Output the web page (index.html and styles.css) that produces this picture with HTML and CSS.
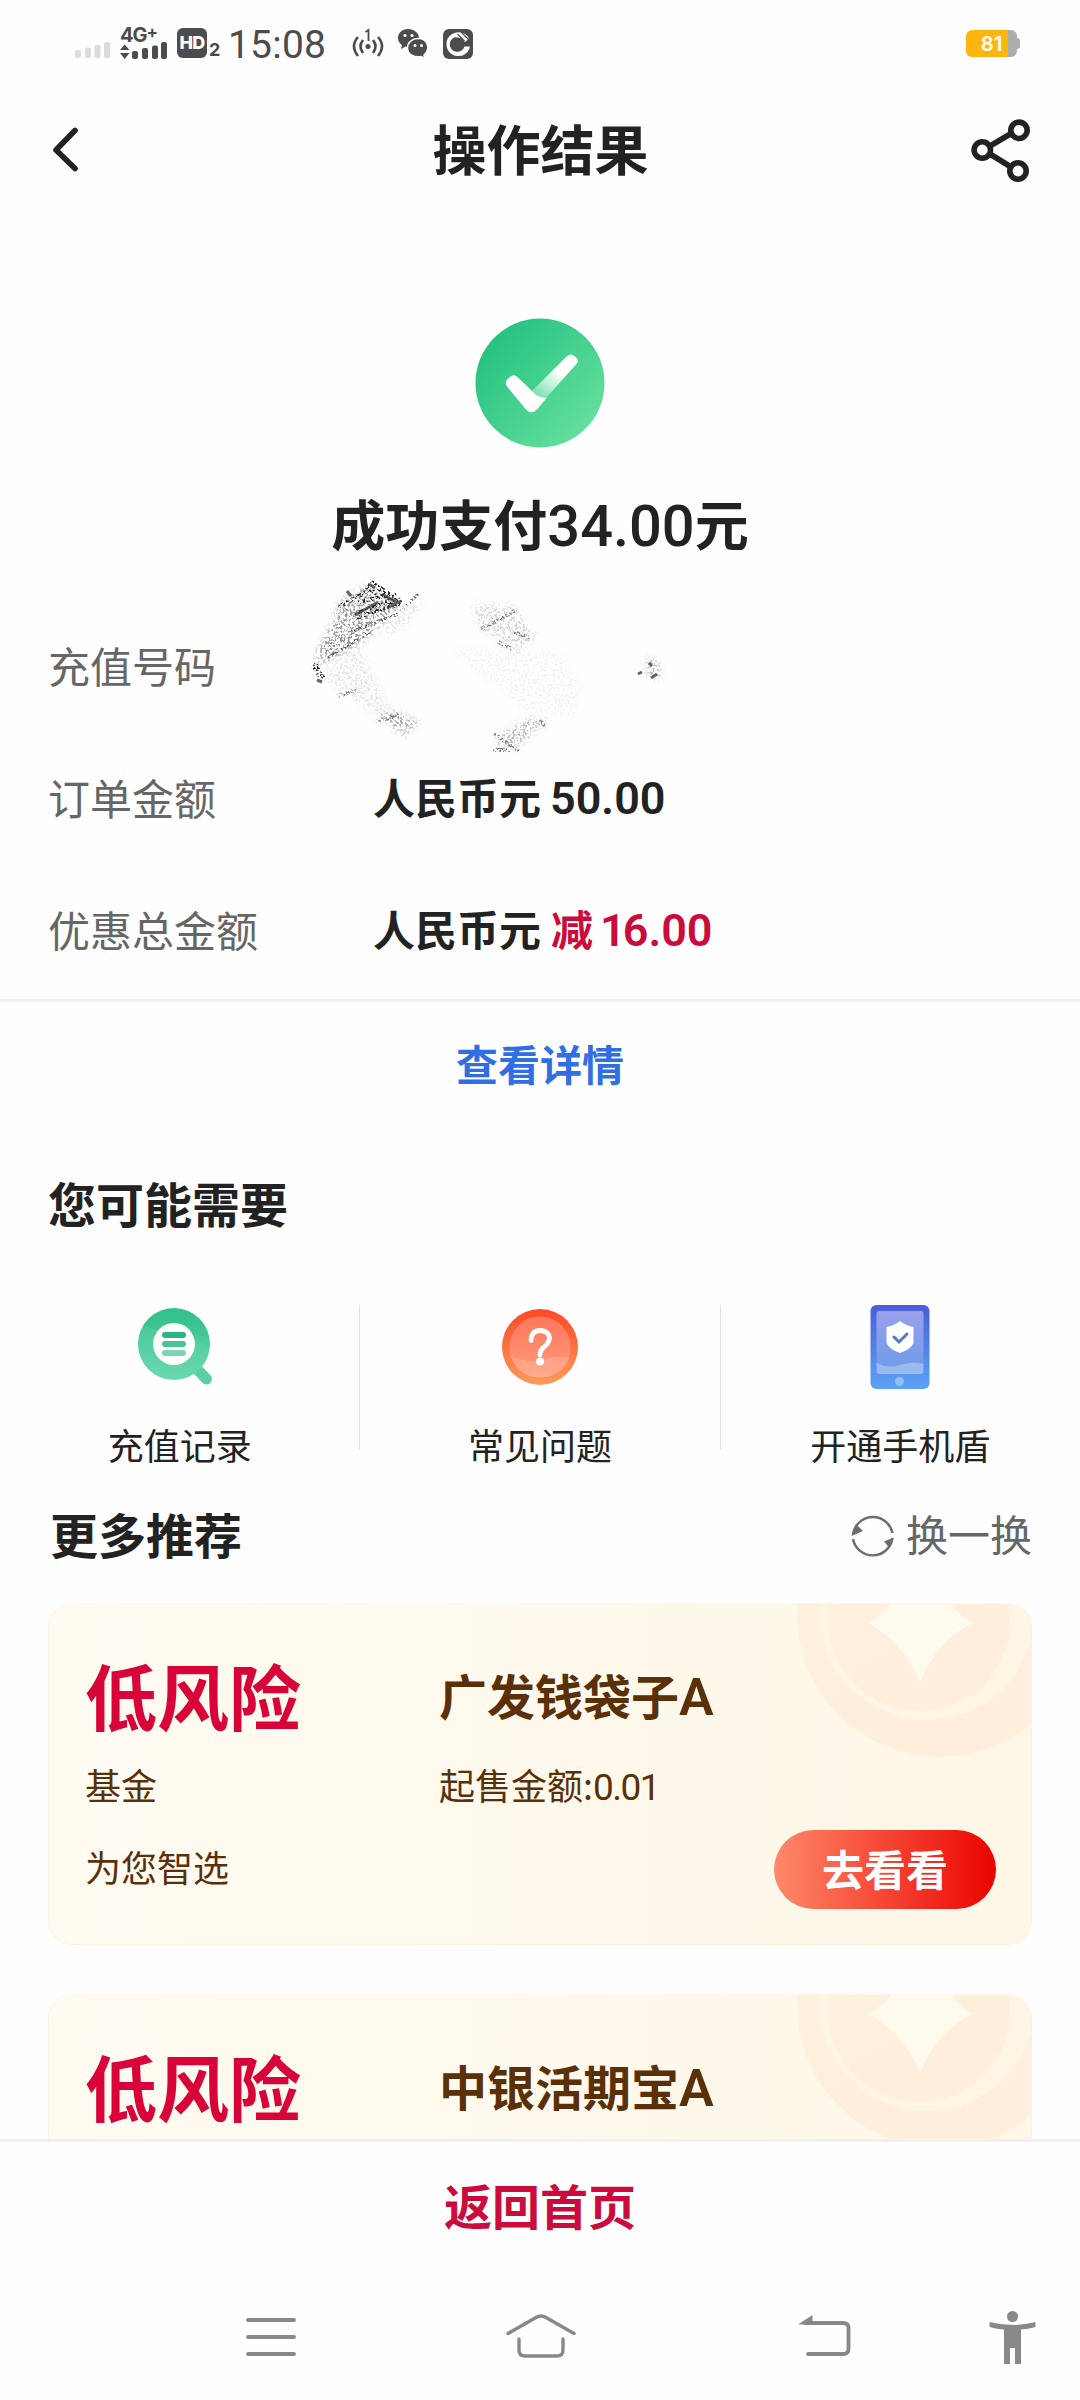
FILE: index.html
```html
<!DOCTYPE html>
<html lang="zh-CN">
<head>
<meta charset="utf-8">
<title>操作结果</title>
<link rel="stylesheet" href="styles.css">
</head>
<body>
<svg class="defs" width="0" height="0" aria-hidden="true">
  <defs>
    <linearGradient id="coinFill" x1="0" y1="0" x2=".6" y2="1"><stop offset="0" stop-color="#fef2e0"/><stop offset="1" stop-color="#feeedb"/></linearGradient>
    <symbol id="coin" viewBox="0 0 236 156">
      <circle cx="144" cy="11" r="143" fill="url(#coinFill)"/>
      <circle cx="131" cy="9" r="108" fill="#fef5e5"/>
      <circle cx="123" cy="17" r="91" fill="url(#coinFill)"/>
      <path d="M72 20Q87 13 97-2H152Q162 11 177 20Q142 36 124 79Q108 40 72 20Z" fill="#fffaee"/>
    </symbol>
  </defs>
</svg>
<div class="screen">
  <header class="status">
    <svg class="signal" width="36" height="18" viewBox="0 0 36 18" fill="#dcdcdc"><rect x="0" y="8" width="6" height="8" rx="2"/><rect x="10" y="5.500" width="6" height="10.500" rx="2"/><rect x="19.500" y="3" width="6" height="13" rx="2"/><rect x="29" y="0" width="6" height="16" rx="2"/></svg>
    <div class="network"><span class="gen">4G<sup>+</sup></span>
      <svg width="48" height="18" viewBox="0 0 48 18" fill="#4c4c4c"><path d="M0 8L4.700 2.500L9.500 8ZM0 11H9.500L4.700 17Z"/><rect x="12" y="9" width="6" height="8" rx="2"/><rect x="22" y="6" width="6" height="11" rx="2"/><rect x="32" y="3.500" width="6" height="13.500" rx="2"/><rect x="41" y="0" width="6" height="17" rx="2"/></svg>
    </div>
    <span class="hd">HD</span><span class="sim">2</span>
    <span class="clock">15:08</span>
    <svg class="hotspot" width="32" height="30" viewBox="0 0 32 30" fill="none" stroke="#4c4c4c" stroke-width="2.600"><path d="M6 9Q-2 18 6 28M11 12Q6 18 11 25M21 12Q26 18 21 25M26 9Q34 18 26 28"/><circle cx="16" cy="18.500" r="2.500" fill="#4c4c4c" stroke="none"/><path d="M13.500 4L16.500 2V13" stroke-width="1.800"/></svg>
    <svg class="wechat" width="32" height="32" viewBox="0 0 32 32"><path d="M11 1C5 1 1 5 1 10C1 13 2.500 15.500 5 17L4 21L8.500 18.600C16 20 22 16 22 10C22 5 17 1 11 1Z" fill="#4c4c4c"/><path d="M21 10.500C15 10.500 10.500 14.500 10.500 20C10.500 26 17 30 24 28.500L28 30.500L27 27C33 22 32 10.500 21 10.500Z" fill="#4c4c4c" stroke="#fff" stroke-width="1.500"/><g fill="#fff"><circle cx="8" cy="7.500" r="1.600"/><circle cx="15" cy="7.500" r="1.600"/><circle cx="18" cy="17.500" r="1.500"/><circle cx="24.500" cy="17.500" r="1.500"/></g></svg>
    <svg class="ccb" width="30" height="30" viewBox="0 0 30 30"><rect width="30" height="30" rx="6" fill="#4c4c4c"/><path d="M16 3.300A11.900 11.900 0 1 0 27 17.500H21.500A7.500 7.500 0 1 1 12 8.200L18 9L22 13L26 9.500A11.900 11.900 0 0 0 16 3.300Z" fill="#fff"/><path d="M14.500 8.500L21 15L14.500 21.500L8 15Z" fill="#4c4c4c"/><path d="M14.500 5L21.500 12M18 3L26 11" stroke="#4c4c4c" stroke-width="1.200"/></svg>
    <div class="battery"><span>81</span></div>
  </header>

  <nav class="titlebar">
    <svg width="30" height="50" viewBox="0 0 30 50" fill="none" stroke="#222" stroke-width="5.600" stroke-linecap="round" stroke-linejoin="round"><path d="M25 5.500L6 25L25 43.500"/></svg>
    <h1>操作结果</h1>
    <svg class="share" width="60" height="66" viewBox="0 0 60 66" fill="none" stroke="#222" stroke-width="5.600"><path d="M20 29L42 16M20 37L41 50"/><circle cx="12.300" cy="33" r="8.200"/><circle cx="49" cy="13.300" r="8.200"/><circle cx="48" cy="54" r="8.200"/></svg>
  </nav>

  <section class="result">
    <svg width="130" height="130" viewBox="0 0 130 130">
      <defs><linearGradient id="ok" x1=".1" y1=".15" x2=".9" y2=".9"><stop offset="0" stop-color="#25c181"/><stop offset="1" stop-color="#66e19d"/></linearGradient>
      <linearGradient id="arm" gradientUnits="userSpaceOnUse" x1="84" y1="54" x2="67" y2="80"><stop offset="0" stop-color="#fff"/><stop offset="1" stop-color="#fff" stop-opacity=".3"/></linearGradient></defs>
      <circle cx="65" cy="65" r="64.500" fill="url(#ok)"/>
      <path d="M92 38Q96 35 99.500 38L101.500 40Q104.500 43 101.500 46L70 81Q63 80 57 73Z" fill="url(#arm)"/>
      <path d="M35.500 58.500Q39.500 56 42.500 59L57 73Q64 81 72 79.500L62 91.500Q56.500 97 51 91.500L32 68.500Q29.500 65 32 61.500Z" fill="#fff"/>
    </svg>
    <h2>成功支付<span class="num">34.00</span>元</h2>
  </section>

  <dl class="details">
    <div class="row"><dt>充值号码</dt><dd class="erased">
      <svg width="360" height="190" viewBox="0 -3 360 190">
        <defs>
          <filter id="grain" x="-10%" y="-10%" width="120%" height="120%"><feTurbulence type="fractalNoise" baseFrequency=".45" numOctaves="3" seed="7" result="n"/><feColorMatrix in="n" type="matrix" values="0 0 0 0 0  0 0 0 0 0  0 0 0 0 0  9 0 0 0 -4.500" result="m"/><feComposite in="SourceGraphic" in2="m" operator="in"/></filter>
          <filter id="dust" x="-10%" y="-10%" width="120%" height="120%"><feGaussianBlur in="SourceGraphic" stdDeviation="3" result="b"/><feTurbulence type="fractalNoise" baseFrequency=".4" numOctaves="3" seed="3" result="n"/><feColorMatrix in="n" type="matrix" values="0 0 0 0 0  0 0 0 0 0  0 0 0 0 0  7 0 0 0 -3.400" result="m"/><feComposite in="b" in2="m" operator="in"/></filter>
        </defs>
        <g filter="url(#dust)">
          <path d="M57 14L92 34L70 54L22 84L10 78L26 48L32 30Z" fill="#222" fill-opacity=".45"/>
          <path d="M7 80L80 46L52 74L10 96Z" fill="#333" fill-opacity=".3"/>
          <path d="M12 105L50 75L90 150L60 138Z" fill="#555" fill-opacity=".14"/>
          <path d="M80 48L120 25L100 52L75 65Z" fill="#555" fill-opacity=".16"/>
          <path d="M68 142L90 140L112 150L96 164Z" fill="#333" fill-opacity=".4"/>
          <path d="M164 32L206 34L228 66L210 80L172 56Z" fill="#444" fill-opacity=".22"/>
          <path d="M192 162L225 145L238 150L208 176L190 174Z" fill="#333" fill-opacity=".35"/>
          <path d="M140 75L250 80L274 115L265 145L215 138Z" fill="#666" fill-opacity=".07"/>
          <path d="M338 84L352 92L352 106L340 106Z" fill="#444" fill-opacity=".4"/>
        </g>
        <g filter="url(#grain)" stroke="#222" fill="none"><path d="M60 12L92 33" stroke-width="11"/><path d="M50 30L88 22M45 43L85 27M30 35L62 18M48 46L90 32" stroke-width="4"/><path d="M38 62L90 42M20 86L62 60M92 40L110 22" stroke-width="3" stroke-opacity=".7"/><path d="M6 94L15 107M5 94H12" stroke-width="6"/><path d="M30 124L48 118M68 150L92 142M186 162L212 180M185 178H202M230 148L238 154M172 58L208 38M190 70L204 77M206 60L222 66" stroke-width="4" stroke-opacity=".55"/></g>
        <path d="M61 12L67 16M74 22L90 31M79 36L93 29M47 43L70 30M43 24L39 19M9 108L14 110M330 102L334 100M341 91L344 94M343 106L349 102" stroke="#333" stroke-opacity=".75" stroke-width="3"/>
      </svg></dd></div>
    <div class="row"><dt>订单金额</dt><dd>人民币元<span class="num amount">50.00</span></dd></div>
    <div class="row"><dt>优惠总金额</dt><dd>人民币元<em>减<span class="num amount"><span class="one">1</span>6.00</span></em></dd></div>
  </dl>
  <a class="more">查看详情</a>

  <h3 class="needs">您可能需要</h3>
  <section class="tools">
    <div class="tool">
      <svg width="90" height="90" viewBox="0 0 90 90">
        <defs><linearGradient id="g1" x1="0" y1="0" x2="0" y2="1"><stop offset="0" stop-color="#35c28d"/><stop offset="1" stop-color="#68d5ad"/></linearGradient></defs>
        <path d="M60 62L71.500 74" stroke="#5bd0a3" stroke-width="11" stroke-linecap="round"/>
        <g transform="translate(0 -2)"><circle cx="39" cy="41" r="36" fill="url(#g1)"/><path d="M8 23A36 36 0 0 1 74 34Z" fill="#2abc85" fill-opacity=".2"/><path d="M8 23L75 43A36 36 0 1 1 8 23Z" fill="#8af0c5" fill-opacity=".12"/>
        <circle cx="39" cy="41" r="21" fill="#fff"/><g stroke-width="6" stroke-linecap="round"><path d="M30 32H48" stroke="#2ab683"/><path d="M30 41H48" stroke="#47c296"/><path d="M30 50H48" stroke="#7dd5b4"/></g></g>
      </svg><span>充值记录</span>
    </div>
    <div class="tool">
      <svg width="90" height="90" viewBox="0 0 90 90">
        <defs><linearGradient id="g2" x1="0" y1="0" x2="0" y2="1"><stop offset="0" stop-color="#fb4924"/><stop offset="1" stop-color="#fd9a5c"/></linearGradient><linearGradient id="g3" x1="0" y1="0" x2="0" y2="1"><stop offset="0" stop-color="#ff765c"/><stop offset="1" stop-color="#ff9c7c"/></linearGradient></defs>
        <circle cx="45" cy="42" r="38" fill="url(#g2)"/><circle cx="45" cy="42" r="30.500" fill="url(#g3)"/><path d="M15 50Q30 58 45 55Q60 50 75 52Q69 72 45 72.500Q22 72 15 50Z" fill="#fff" fill-opacity=".14"/>
        <path d="M36 35.500Q36 25.500 45 25.500Q54 26 54.500 33Q54 38 49 42Q45 45 45 50" fill="none" stroke="#fff" stroke-width="4.800" stroke-linecap="round"/><circle cx="45" cy="56.500" r="4" fill="#fff"/>
      </svg><span>常见问题</span>
    </div>
    <div class="tool">
      <svg width="90" height="90" viewBox="1 0 90 90">
        <defs><linearGradient id="g4" x1="0" y1="0" x2="0" y2="1"><stop offset="0" stop-color="#4b5fd8"/><stop offset="1" stop-color="#5ba3f6"/></linearGradient><linearGradient id="g5" x1="0" y1="0" x2="0" y2="1"><stop offset="0" stop-color="#99a0ec"/><stop offset="1" stop-color="#6a9ce8"/></linearGradient></defs>
        <rect x="16.500" y="0" width="59" height="84" rx="6" fill="url(#g4)"/><rect x="22.500" y="6" width="47" height="63" rx="3" fill="url(#g5)"/>
        <path d="M22.500 58Q34 64 46 60Q58 56 69.500 59V66Q69.500 69 66 69H26Q22.500 69 22.500 66Z" fill="#fff" fill-opacity=".3"/><circle cx="45.500" cy="76.500" r="4.500" fill="#91bdf8"/>
        <path d="M46 16Q52 21 59.500 22V38Q57 44 46 48Q35 44 32.500 38V22Q40 21 46 16Z" fill="#fff"/><path d="M40 32L45 37L53 29" fill="none" stroke="#5278c4" stroke-width="3" stroke-linecap="round"/>
      </svg><span>开通手机盾</span>
    </div>
  </section>

  <div class="rechead"><h3>更多推荐</h3>
    <div class="swap"><svg width="44" height="44" viewBox="0 0 44 44" fill="none" stroke="#6c6c6c" stroke-width="2.400"><path d="M2 21A20 20 0 0 1 41.500 19M2 25A20 20 0 0 0 41.500 24"/><path d="M.5 22L5 10L12 17ZM42.500 23.500L38.500 34L33 27.500Z" fill="#6c6c6c" stroke="none"/></svg><span>换一换</span></div>
  </div>
  <main class="cards">
    <article class="card">
      <svg class="coin" width="236" height="156"><use href="#coin"/></svg>
      <strong class="risk">低风险</strong><strong class="fund">广发钱袋子<span class="latin">A</span></strong>
      <span class="kind">基金</span><span class="min">起售金额:<span class="num">0.01</span></span>
      <span class="pick">为您智选</span><a class="go">去看看</a>
    </article>
    <article class="card">
      <svg class="coin" width="236" height="156"><use href="#coin"/></svg>
      <strong class="risk">低风险</strong><strong class="fund">中银活期宝<span class="latin">A</span></strong>
    </article>
  </main>
  <a class="home">返回首页</a>
  <footer class="keys">
    <svg width="1080" height="70" viewBox="0 2300 1080 70" fill="none" stroke="#888" stroke-width="3.800" stroke-linecap="round" stroke-linejoin="round">
      <path d="M248 2320H294M248 2337H294M248 2354H294"/>
      <path d="M508 2333.500L536 2317.500Q541 2314.500 546 2317.500L574 2333.500M519 2339V2350Q519 2356 525 2356H557Q563 2356 563 2350V2339" stroke-width="3.400"/>
      <path d="M805 2323H843Q848.500 2323 848.500 2328V2349Q848.500 2354 843 2354H808"/><path d="M798 2324.500L812.500 2315V2324.500Z" fill="#888" stroke="none"/>
      <g fill="#888" stroke="none"><circle cx="1012.500" cy="2316.500" r="5.500"/><path d="M989.500 2322Q1012.500 2328 1035.500 2322V2327Q1028 2329 1021 2329.500V2364H1015V2348H1010V2364H1004V2329.500Q997 2329 989.500 2327Z"/></g>
    </svg>
  </footer>
</div>
</body>
</html>
```
FILE: styles.css
```css
* { box-sizing: border-box; margin: 0; padding: 0; }
body { background: #fefefe; color: #222; font-family: "Noto Sans CJK SC", sans-serif; }
svg { display: block; flex: none; }
h1, h2, h3, strong { font-weight: 700; }
.defs { position: absolute; }
.screen { width: 1080px; height: 2400px; overflow: hidden; display: flex; flex-direction: column; }
.screen > * { flex: none; }
.num { font-family: Roboto, sans-serif; font-weight: 500; font-size: 1.07em; line-height: 1; }

.status { height: 90px; padding: 0 63px 0 75px; display: flex; align-items: flex-start; color: #4c4c4c; font-family: Roboto, sans-serif; }
.signal { margin-top: 42px; }
.network { width: 48px; margin: 25px 0 0 9px; }
.gen { display: block; height: 17px; font: 700 20px/20px Inter, sans-serif; letter-spacing: -1px; white-space: nowrap; }
.gen sup { font-size: 17px; line-height: 0; vertical-align: 4px; }
.hd { width: 30px; height: 30px; margin: 28px 0 0 9px; border-radius: 6px; background: #4c4c4c; color: #fff; font: 800 18px/30px Inter, sans-serif; letter-spacing: -.8px; text-align: center; }
.sim { width: 13px; margin: 40px 0 0 2px; font: 700 18px/20px Inter, sans-serif; }
.clock { width: 122px; margin: 22px 0 0 6px; font-size: 39px; line-height: 46px; letter-spacing: .2px; }
.hotspot { margin: 28px 0 0 2px; }
.wechat { margin: 28px 0 0 13px; }
.ccb { margin: 29px 0 0 14px; }
.battery { width: 51px; height: 27px; margin: 30px 0 0 auto; border-radius: 6px; background: linear-gradient(90deg, #fcb50f 42px, #adadad 42px); color: #fffbe0; text-align: center; font: 700 20px/28px Inter, sans-serif; position: relative; }
.battery::after { content: ""; position: absolute; right: -3px; top: 8px; width: 4px; height: 11px; background: #adadad; border-radius: 0 3px 3px 0; }

.titlebar { height: 120px; padding: 0 50px; display: flex; align-items: center; justify-content: space-between; }
.titlebar h1 { font-size: 54px; line-height: 80px; padding: 0 0 4px 31px; }

.result { height: 388px; padding-top: 108px; display: flex; flex-direction: column; align-items: center; }
.result h2 { font-size: 54px; line-height: 80px; margin-top: 35px; }

.details { height: 404px; border-bottom: 3px solid #f0f0f0; }
.row { height: 132px; padding-left: 48px; display: flex; align-items: center; font-size: 42px; }
dt { width: 325px; color: #666; }
dd { font-weight: 700; white-space: nowrap; line-height: 62px; }
em { font-style: normal; color: #cc0a3b; margin-left: 10px; }
.amount { margin-left: 9px; font-weight: 600; }
.one { margin: 0 -3px 0 -2px; }
.erased { margin-left: -65px; }
.more { height: 126px; line-height: 122px; text-align: center; color: #306fe3; font-size: 42px; font-weight: 700; }

h3 { font-size: 48px; line-height: 72px; }
.needs { height: 177px; padding: 38px 48px 0; }
.tools { height: 144px; display: flex; }
.tool { flex: 1; height: 144px; display: flex; flex-direction: column; align-items: center; font-size: 36px; border-left: 1px solid #e2e2e2; }
.tool:first-child { border-left: 0; }
.tool span { margin-top: 22px; line-height: 54px; }

.rechead { height: 154px; padding: 48px 48px 0 50px; display: flex; justify-content: space-between; align-items: flex-start; }
.swap { display: flex; align-items: flex-start; gap: 11px; line-height: 72px; font-size: 42px; color: #666; }
.swap svg { margin-top: 17px; }
.cards { height: 536px; padding: 0 48px; overflow: hidden; display: flex; flex-direction: column; gap: 49px; }
.card { position: relative; flex: none; height: 342px; border: 1px solid #fcf2dc; border-top-color: #fef6e8; border-radius: 24px; overflow: hidden; background: linear-gradient(90deg, #fffbf2, #fef7e7); color: #5a3008; padding: 36px 35px 0 36px; display: grid; grid-template-columns: 354px 1fr; grid-template-rows: 108px 72px 92px; align-items: center; font-size: 36px; }
.card > * { position: relative; }
.card .coin { position: absolute; right: -1px; top: -1px; }
.risk { font-size: 72px; line-height: 100px; color: #d80439; }
.fund { font-size: 48px; line-height: 70px; }
.latin { font-family: Roboto, sans-serif; font-weight: 600; font-size: 52px; line-height: 1; }
.min .num { font-weight: 400; font-size: 37px; letter-spacing: -1.500px; }
.go { justify-self: end; width: 222px; height: 79px; margin-top: 6px; border-radius: 40px; background: linear-gradient(90deg, #ff8969, #eb0300); color: #fff; font-size: 42px; font-weight: 700; line-height: 75px; text-align: center; }
.home { height: 133px; border-top: 3px solid #f0f0f0; line-height: 125px; text-align: center; color: #cc0a3b; font-size: 48px; font-weight: 700; }
.keys { padding-top: 28px; }
```
